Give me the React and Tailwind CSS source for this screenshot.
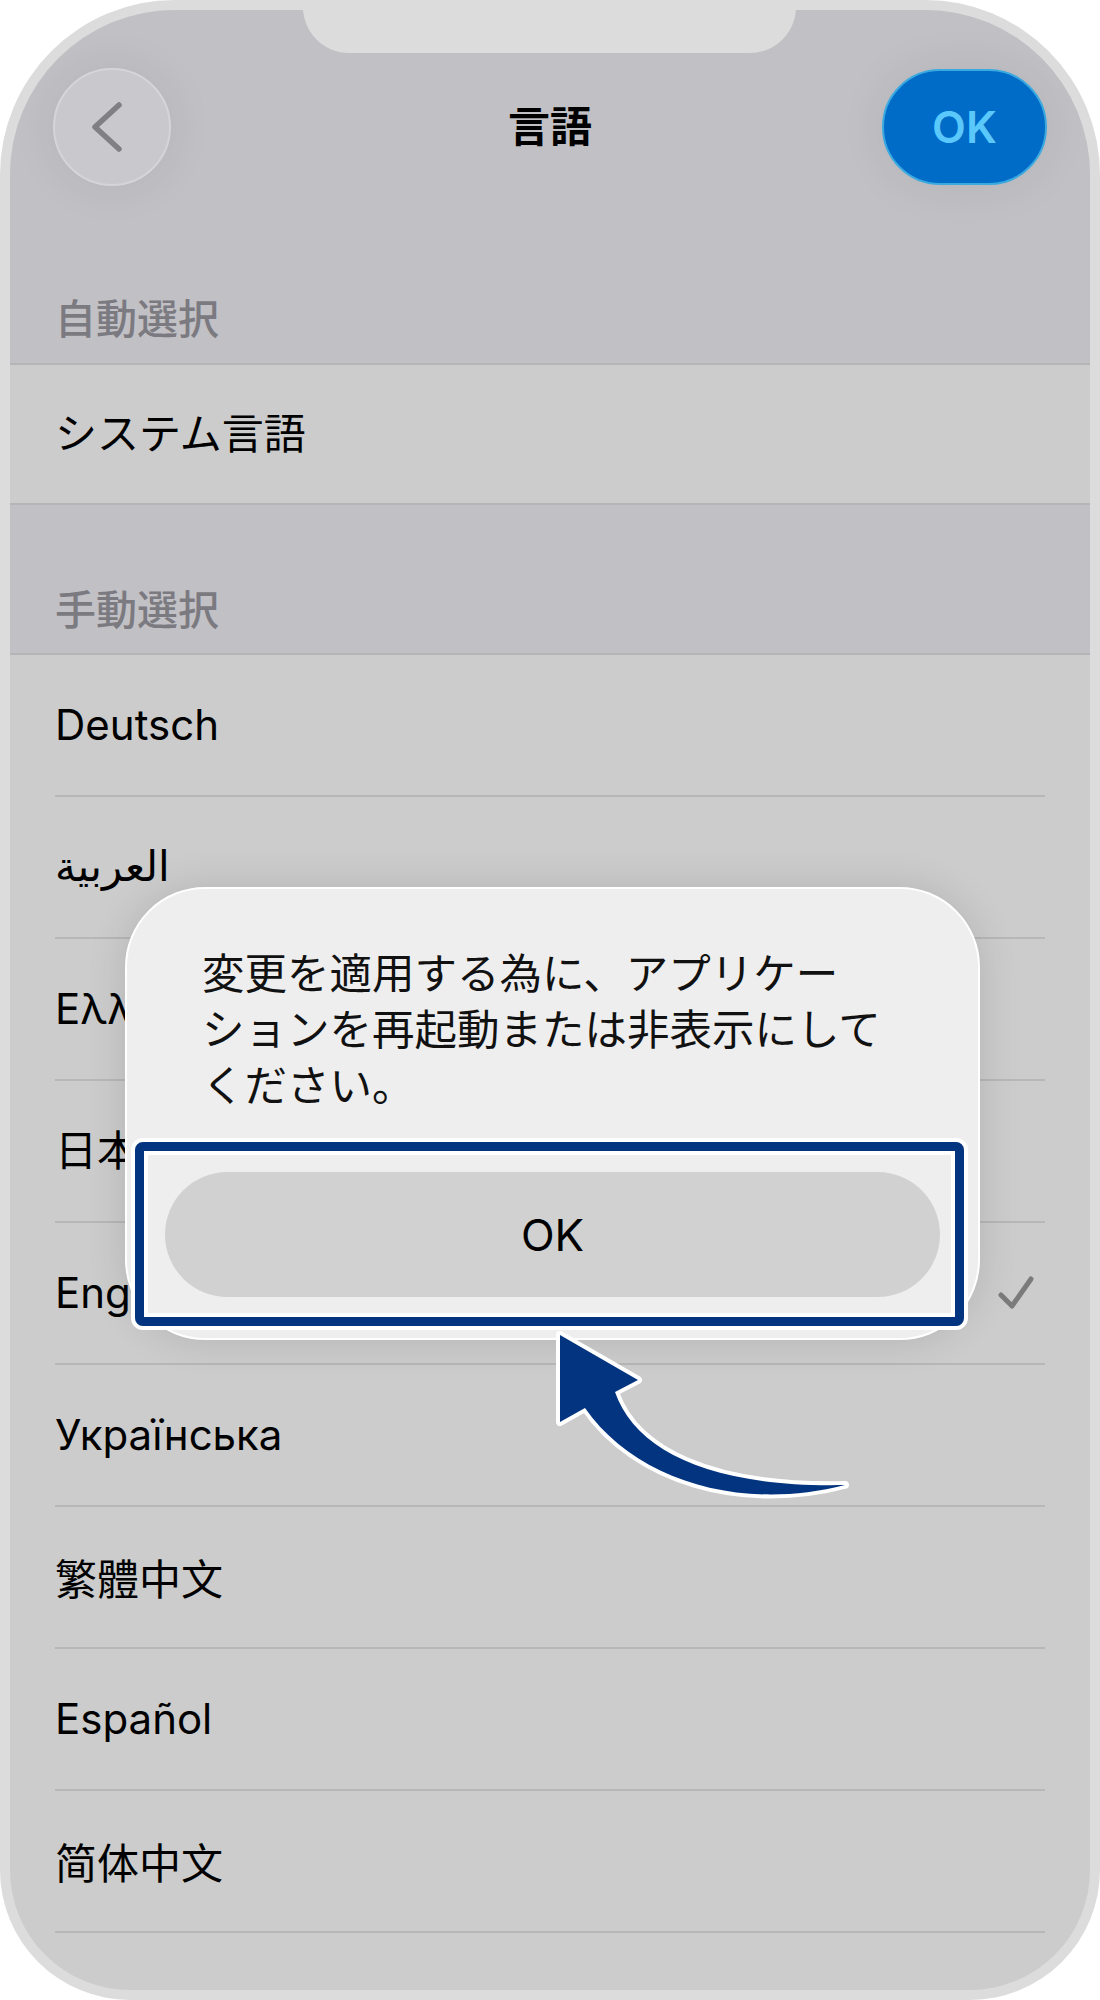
import React from "react";

// 言語設定画面 + 再起動ダイアログ（注釈つき）
const languages = [
  { label: "Deutsch" },
  { label: "العربية", font: "font-['DejaVu_Sans',sans-serif]" },
  { label: "Ελληνικά" },
  { label: "日本語" },
  { label: "English", checked: true },
  { label: "Українська" },
  { label: "繁體中文", font: "font-['Noto_Sans_CJK_TC',sans-serif]" },
  { label: "Español" },
  { label: "简体中文", font: "font-['Noto_Sans_CJK_SC',sans-serif]" },
];

const BackButton = () => (
  <div className="w-[118px] h-[118px] rounded-full bg-[#c9c9cd] border-2 border-[#d5d5d8] flex items-center justify-center shadow-[0_0_50px_rgba(0,0,0,0.07)]">
    <svg width="60" height="60" viewBox="0 0 60 60" fill="none">
      <path d="M37 8 L13 30 L37 52" stroke="#808082" strokeWidth="5.5" strokeLinecap="round" strokeLinejoin="round" />
    </svg>
  </div>
);

const OkButton = () => (
  <div className="w-[165px] h-[116px] rounded-full bg-[#006cc8] border-2 border-[#3aa9e0] flex items-center justify-center shadow-[0_0_50px_rgba(0,0,0,0.07)]">
    <span className="text-[44px] font-semibold text-[#5ac8fa] leading-none">OK</span>
  </div>
);

const App = () => {
  return (
    <div className="w-[1100px] h-[2000px] bg-white font-[Inter,'Noto_Sans_CJK_JP','DejaVu_Sans',sans-serif]">
      <div className="relative w-full h-full bg-[#dcdcdc] rounded-t-[175px] rounded-b-[130px] p-[10px]">
        <div className="h-full rounded-t-[165px] rounded-b-[120px] overflow-hidden bg-[#cbcccb] flex flex-col">
          {/* header */}
          <div className="h-[353px] bg-[#c1c0c5] flex flex-col">
            <div className="mt-[58px] px-[43px] grid grid-cols-[165px_1fr_165px] items-center">
              <BackButton />
              <h1 className="text-center text-[42px] font-bold text-black leading-none">言語</h1>
              <OkButton />
            </div>
            <div className="mt-auto pl-[45px] pb-[19px] text-[41px] leading-[50px] font-medium text-[#7b7a80]">
              自動選択
            </div>
          </div>
          <div className="h-[2px] bg-[#b5b5b8]" />
          <div className="h-[138px] flex items-center pl-[45px] text-[42px] text-black leading-none">
            システム言語
          </div>
          <div className="h-[2px] bg-[#b5b5b8]" />
          <div className="h-[148px] bg-[#c1c0c5] flex flex-col justify-end">
            <div className="pl-[45px] pb-[18px] text-[41px] leading-[50px] font-medium text-[#7b7a80]">
              手動選択
            </div>
          </div>
          <div className="h-[2px] bg-[#b5b5b8]" />
          {languages.map((lang) => (
            <div key={lang.label} className="mx-[45px] h-[142px] border-b-2 border-[#b6b7b6] flex items-center justify-between">
              <span className={`text-[42px] text-black leading-none ${lang.font || ""}`}>{lang.label}</span>
              {lang.checked && (
                <svg width="44" height="44" viewBox="0 0 44 44" fill="none" className="mr-[8px]">
                  <path d="M8 24 L19 35 L38 8" stroke="#7b7b7b" strokeWidth="5" strokeLinecap="round" strokeLinejoin="round" />
                </svg>
              )}
            </div>
          ))}
        </div>

        {/* notch */}
        <div className="absolute left-[303px] top-0 w-[493px] h-[53px] bg-[#dcdcdc] rounded-b-[46px]" />

        {/* dialog */}
        <div className="absolute left-[125px] top-[887px] w-[855px] h-[453px] rounded-[80px] bg-[#eeeeee] border-2 border-white shadow-[0_0_40px_rgba(0,0,0,0.12)] flex flex-col">
          <div className="pt-[57px] pl-[75px] text-[42.5px] leading-[56px] text-[#111]">
            <span className="block">変更を適用する為に、アプリケー</span>
            <span className="block">ションを再起動または非表示にして</span>
            <span className="block">ください。</span>
          </div>
          <div className="mt-auto mx-[38px] mb-[41px] h-[125px] rounded-full bg-[#d0d1d0] flex items-center justify-center">
            <span className="text-[44px] text-black leading-none">OK</span>
          </div>
        </div>

        {/* highlight box */}
        <div className="absolute left-[131px] top-[1138px] w-[837px] h-[192px] border-[4px] border-white rounded-[12px]">
          <div className="w-full h-full border-[9px] border-[#02347f] rounded-[8px]">
            <div className="w-full h-full border-[4px] border-white" />
          </div>
        </div>

        {/* arrow */}
        <svg className="absolute left-[540px] top-[1320px]" width="320" height="190" viewBox="0 0 320 190">
          <path
            d="M20 15 L98 60 L75 72 C95 130 170 168 305 165 C200 192 95 160 45 88 L20 102 Z"
            fill="#02347f"
            stroke="#ffffff"
            strokeWidth="8"
            strokeLinejoin="round"
            paintOrder="stroke"
          />
        </svg>
      </div>
    </div>
  );
};

export default App;
